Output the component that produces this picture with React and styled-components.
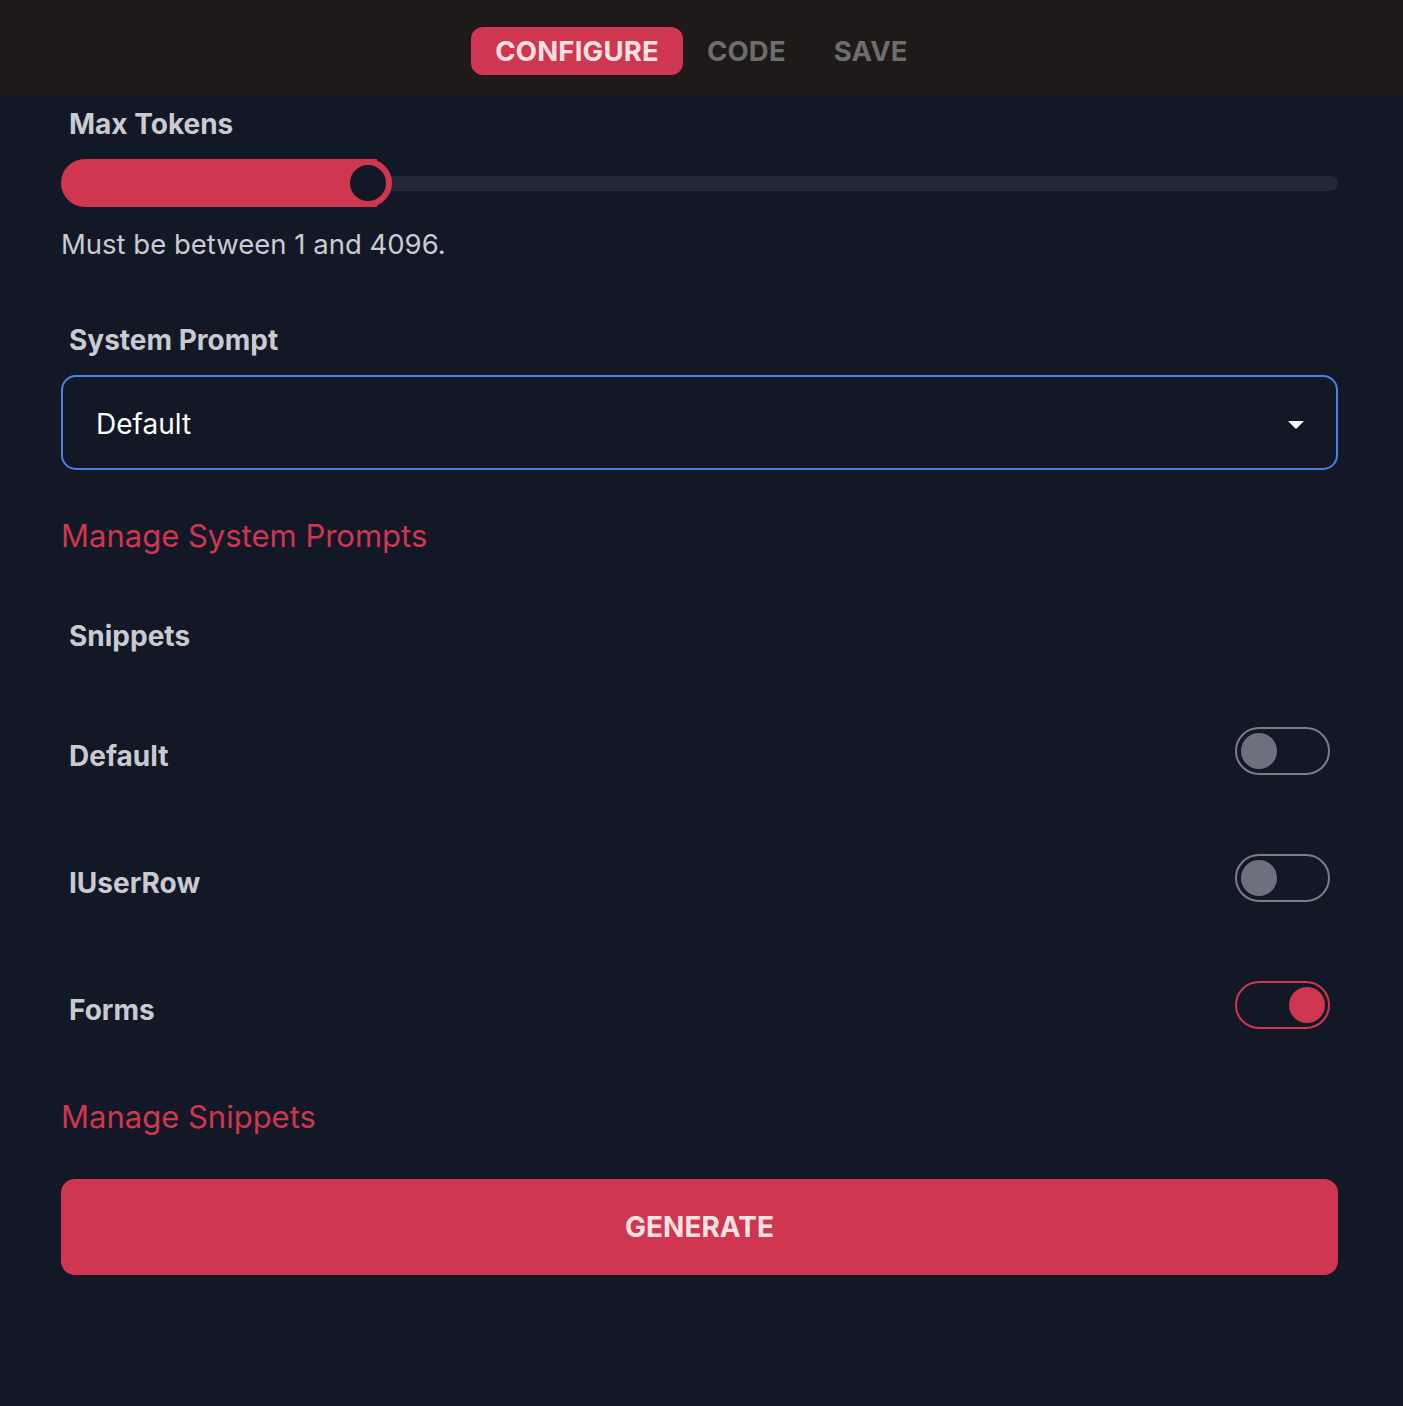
import React, { useState } from "react";
import styled, { createGlobalStyle } from "styled-components";

const GlobalStyle = createGlobalStyle`
  html, body {
    margin: 0;
    padding: 0;
    background: #131827;
  }
  body {
    font-family: Inter, "Noto Sans", "Liberation Sans", sans-serif;
    -webkit-font-smoothing: antialiased;
  }
`;

const RED = "#d0364f";

const TABS = ["CONFIGURE", "CODE", "SAVE"];

const SNIPPETS = [
  { name: "Default", on: false },
  { name: "IUserRow", on: false },
  { name: "Forms", on: true },
];

const MIN = 1;
const MAX = 4096;

const App = () => {
  const [tab, setTab] = useState("CONFIGURE");
  const [tokens] = useState(987);
  const [snippets, setSnippets] = useState(SNIPPETS);

  const pct = (tokens - MIN) / (MAX - MIN);

  const toggle = (name) =>
    setSnippets((list) =>
      list.map((s) => (s.name === name ? { ...s, on: !s.on } : s))
    );

  return (
    <>
      <GlobalStyle />
      <Header>
        {TABS.map((t) => (
          <Tab key={t} $active={t === tab} onClick={() => setTab(t)}>
            {t}
          </Tab>
        ))}
      </Header>

      <Content>
        <Label $top={11}>Max Tokens</Label>
        <Slider>
          <Fill style={{ width: `calc(${pct * 100}% + 9px)` }} />
          <Track />
          <Thumb style={{ left: `calc(${pct * 100}% - 24px)` }} />
        </Slider>
        <Help>Must be between 1 and 4096.</Help>

        <Label $top={60}>System Prompt</Label>
        <Select>
          <SelectValue>Default</SelectValue>
          <Caret />
        </Select>
        <ManageLink href="#" $top={46}>
          Manage System Prompts
        </ManageLink>

        <Label $top={62}>Snippets</Label>
        <SnippetList>
          {snippets.map((s) => (
            <SnippetRow key={s.name}>
              <RowLabel>{s.name}</RowLabel>
              <Switch $on={s.on} onClick={() => toggle(s.name)}>
                <Knob $on={s.on} />
              </Switch>
            </SnippetRow>
          ))}
        </SnippetList>
        <ManageLink href="#" $top={24}>
          Manage Snippets
        </ManageLink>

        <GenerateButton>GENERATE</GenerateButton>
      </Content>
    </>
  );
};

const Header = styled.header`
  height: 95px;
  background: #1e1a19;
  display: flex;
  align-items: center;
  justify-content: center;
  padding-top: 6px;
  box-sizing: border-box;
`;

const Tab = styled.button`
  height: 48px;
  padding: 0 24px;
  border: none;
  border-radius: 12px;
  background: ${(p) => (p.$active ? RED : "transparent")};
  color: ${(p) => (p.$active ? "#ffe1e3" : "#6d6d6d")};
  font-family: inherit;
  font-size: 27.5px;
  font-weight: 700;
  letter-spacing: 0.2px;
  cursor: pointer;
`;

const Content = styled.main`
  padding: 0 65px 131px 61px;
  display: flex;
  flex-direction: column;
`;

const Label = styled.div`
  margin-top: ${(p) => p.$top}px;
  padding-left: 8px;
  font-size: 28px;
  line-height: 36px;
  font-weight: 700;
  color: #c9cbd1;
`;

const Slider = styled.div`
  position: relative;
  margin-top: 17px;
  height: 48px;
  display: flex;
  align-items: center;
`;

const Fill = styled.div`
  height: 48px;
  background: ${RED};
  border-radius: 24px 0 0 24px;
  flex-shrink: 0;
`;

const Track = styled.div`
  flex: 1;
  height: 15px;
  background: #232937;
  border-radius: 0 8px 8px 0;
`;

const Thumb = styled.div`
  position: absolute;
  top: 0;
  width: 48px;
  height: 48px;
  box-sizing: border-box;
  border-radius: 50%;
  border: 6px solid ${RED};
  background: #131827;
`;

const Help = styled.div`
  margin-top: 19px;
  font-size: 27.5px;
  line-height: 36px;
  color: #c9cbd1;
`;

const Select = styled.div`
  margin-top: 17px;
  height: 95px;
  box-sizing: border-box;
  border: 2px solid #4b7fe3;
  border-radius: 15px;
  padding: 0 32px 0 33px;
  display: flex;
  align-items: center;
  justify-content: space-between;
  font-size: 28px;
  color: #ffffff;
`;

const SelectValue = styled.span`
  margin-top: 3px;
`;

const Caret = styled.span`
  width: 0;
  height: 0;
  border-left: 8px solid transparent;
  border-right: 8px solid transparent;
  border-top: 8px solid #ffffff;
  margin-top: 4px;
`;

const ManageLink = styled.a`
  margin-top: ${(p) => p.$top}px;
  align-self: flex-start;
  font-size: 31px;
  line-height: 40px;
  color: ${RED};
  text-decoration: none;
`;

const SnippetList = styled.div`
  margin-top: 38px;
  display: flex;
  flex-direction: column;
`;

const SnippetRow = styled.div`
  height: 127px;
  padding: 0 8px;
  display: flex;
  align-items: center;
  justify-content: space-between;
`;

const RowLabel = styled.div`
  font-size: 28px;
  line-height: 36px;
  font-weight: 700;
  color: #c9cbd1;
`;

const Switch = styled.button`
  width: 95px;
  height: 48px;
  margin-bottom: 9px;
  box-sizing: border-box;
  padding: 0 3.5px;
  border-radius: 24px;
  border: 2px solid ${(p) => (p.$on ? RED : "#7b7e87")};
  background: transparent;
  display: flex;
  align-items: center;
  justify-content: ${(p) => (p.$on ? "flex-end" : "flex-start")};
  cursor: pointer;
`;

const Knob = styled.span`
  width: 36px;
  height: 36px;
  border-radius: 50%;
  background: ${(p) => (p.$on ? RED : "#6e717b")};
`;

const GenerateButton = styled.button`
  margin-top: 42px;
  height: 96px;
  border: none;
  border-radius: 14px;
  background: ${RED};
  color: #fde2e2;
  font-family: inherit;
  font-size: 28px;
  font-weight: 700;
  cursor: pointer;
`;

export default App;
